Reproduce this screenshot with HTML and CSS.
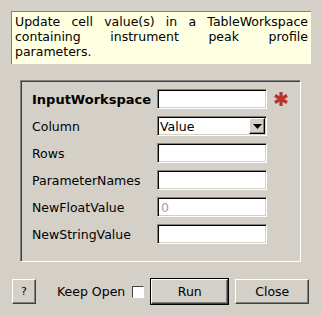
FILE: index.html
```html
<!DOCTYPE html>
<html lang="en">
<head>
    <meta charset="UTF-8">
    <title>UpdatePeakParameterTable</title>
    <link rel="stylesheet" href="styles.css">
</head>
<body>
    <div class="dialog">
        <div class="description">
            Update cell value(s) in a TableWorkspace containing instrument peak profile parameters.
        </div>

        <div class="group">
            <div class="prop-label bold">InputWorkspace</div>
            <div class="field"></div>
            <div class="required">
                <svg width="16" height="16" viewBox="0 0 16 16">
                    <g stroke="#b8352a" stroke-width="3.2" stroke-linecap="butt">
                        <line x1="8" y1="1" x2="8" y2="15"/>
                        <line x1="2" y1="4.5" x2="14" y2="11.5"/>
                        <line x1="2" y1="11.5" x2="14" y2="4.5"/>
                    </g>
                </svg>
            </div>

            <div class="prop-label">Column</div>
            <div class="field combo">
                <span class="combo-text">Value</span>
                <span class="combo-btn">
                    <svg width="9" height="5" viewBox="0 0 9 5"><polygon points="0,0 9,0 4.5,5" fill="#000"/></svg>
                </span>
            </div>
            <div></div>

            <div class="prop-label">Rows</div>
            <div class="field"></div>
            <div></div>

            <div class="prop-label">ParameterNames</div>
            <div class="field"></div>
            <div></div>

            <div class="prop-label">NewFloatValue</div>
            <div class="field"><span class="placeholder">0</span></div>
            <div></div>

            <div class="prop-label">NewStringValue</div>
            <div class="field"></div>
            <div></div>
        </div>

        <div class="buttons">
            <button class="btn help">?</button>
            <label class="keep-open">Keep Open <span class="check"></span></label>
            <button class="btn run">Run</button>
            <button class="btn close">Close</button>
        </div>
    </div>
</body>
</html>
```

FILE: styles.css
```css
body {
    margin: 0;
    background-color: #d4d0c8;
    font-family: "DejaVu Sans", sans-serif;
    font-size: 12.5px;
    color: #000;
}

.dialog {
    width: 321px;
    height: 316px;
    padding: 11px 0 0 11px;
    box-sizing: border-box;
}

.description {
    width: 300px;
    height: 53px;
    box-sizing: border-box;
    background-color: #ffffe1;
    border-top: 1px solid #808080;
    border-left: 1px solid #808080;
    padding: 2px 3px 0 3px;
    line-height: 15px;
    text-align: justify;
}

.group {
    margin: 16px 0 0 9px;
    width: 281px;
    height: 182px;
    box-sizing: border-box;
    border-top: 1px solid #808080;
    border-left: 1px solid #808080;
    border-right: 1px solid #fff;
    border-bottom: 1px solid #fff;
    box-shadow: inset 1px 1px 0 #404040;
    padding: 8px 0 0 11px;
    display: grid;
    grid-template-columns: 125px 110px 24px;
    grid-auto-rows: 20px;
    row-gap: 7px;
    align-items: center;
}

.prop-label {
    white-space: nowrap;
}

.bold {
    font-weight: bold;
    font-size: 13px;
}

.field {
    height: 20px;
    box-sizing: border-box;
    background-color: #fff;
    border-top: 1px solid #808080;
    border-left: 1px solid #808080;
    border-right: 1px solid #fff;
    border-bottom: 1px solid #fff;
    box-shadow: inset 1px 1px 0 #000, inset -1px -1px 0 #d4d0c8;
    padding: 2px 3px;
    line-height: 15px;
}

.placeholder {
    color: #a0a0a0;
}

.required {
    padding-left: 6px;
    display: flex;
    align-items: center;
}

.combo {
    display: flex;
    align-items: center;
    justify-content: space-between;
    padding: 0 1px 0 2px;
}

.combo-btn {
    width: 16px;
    height: 16px;
    box-sizing: border-box;
    background-color: #d4d0c8;
    border-top: 1px solid #fff;
    border-left: 1px solid #fff;
    border-right: 1px solid #000;
    border-bottom: 1px solid #000;
    box-shadow: inset -1px -1px 0 #808080;
    display: flex;
    align-items: center;
    justify-content: center;
}

.buttons {
    margin-top: 17px;
    display: flex;
    align-items: center;
    margin-left: 1px;
}

.btn {
    height: 25px;
    box-sizing: border-box;
    background-color: #d4d0c8;
    font-family: "DejaVu Sans", sans-serif;
    font-size: 12.5px;
    color: #000;
    border-top: 1px solid #fff;
    border-left: 1px solid #fff;
    border-right: 1px solid #404040;
    border-bottom: 1px solid #404040;
    box-shadow: inset -1px -1px 0 #808080;
    padding: 0;
}

.help {
    width: 24px;
    font-size: 11px;
}

.keep-open {
    margin-left: 21px;
    display: flex;
    align-items: center;
}

.check {
    width: 12px;
    height: 12px;
    box-sizing: border-box;
    background-color: #fff;
    border-top: 1px solid #404040;
    border-left: 1px solid #404040;
    border-right: 1px solid #fff;
    border-bottom: 1px solid #fff;
    margin-left: 7px;
}

.run {
    width: 77px;
    margin-left: 7px;
    outline: 1px solid #000;
}

.close {
    width: 74px;
    margin-left: 7px;
}
```
